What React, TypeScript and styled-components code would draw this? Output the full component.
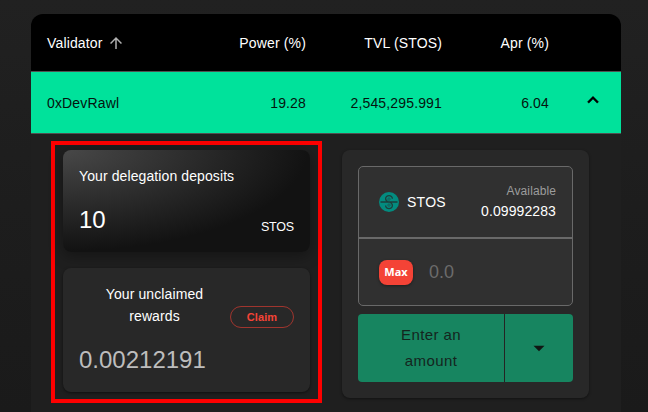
import React from "react";
import styled, { createGlobalStyle } from "styled-components";

const GlobalStyle = createGlobalStyle`
  * { box-sizing: border-box; }
  html, body { margin: 0; background: #202020; }
  body {
    font-family: "Liberation Sans", Arial, sans-serif;
    font-size: 14px;
    color: #fff;
    overflow: hidden;
  }
`;

const Page = styled.main`
  width: 648px;
  height: 412px;
  padding: 14px 27px 0 31px;
  overflow: hidden;
  background: linear-gradient(180deg, #212121 0%, #1d1d1d 50%, #1a1a1a 100%);
`;

const Table = styled.section`
  height: 440px;
  border-radius: 12px 12px 0 0;
  overflow: hidden;
  background: #1f1f1f;
`;

const Row = styled.div<{ $header?: boolean }>`
  display: grid;
  grid-template-columns: 127px 132px 136px 107px 1fr;
  align-items: center;
  height: ${(p) => (p.$header ? 58 : 62)}px;
  padding-left: 16px;
  border-bottom: 1px solid #515151;
  background: ${(p) => (p.$header ? "#000" : "#00e29b")};
  color: ${(p) => (p.$header ? "#fff" : "#04140e")};
  letter-spacing: 0.15px;
  line-height: 20px;
`;

const Cell = styled.div<{ $numeric?: boolean }>`
  display: flex;
  align-items: center;
  justify-content: ${(p) => (p.$numeric ? "flex-end" : "flex-start")};
  white-space: nowrap;
  padding-top: 1px;
`;

const SortIcon = styled.svg`
  width: 18px;
  height: 18px;
  margin-left: 4px;
  fill: #b0b0b0;
`;

const Toggle = styled.button`
  display: flex;
  justify-self: start;
  margin: -6px 0 0 33px;
  padding: 0;
  border: 0;
  background: none;
  color: #000;
  svg { width: 22px; height: 22px; fill: currentColor; }
`;

const Details = styled.div`
  display: flex;
  align-items: flex-start;
  gap: 20px;
  padding: 7px 0 0 20px;
`;

const Highlight = styled.div`
  display: flex;
  flex-direction: column;
  gap: 16px;
  width: 271px;
  height: 262px;
  padding: 5px 8px;
  border: 4px solid #fe0000;
`;

const Card = styled.article<{ $gradient?: boolean }>`
  display: flex;
  flex-direction: column;
  justify-content: space-between;
  height: ${(p) => (p.$gradient ? 102 : 124)}px;
  padding: 15px 16px 14px;
  border-radius: 8px;
  background: ${(p) =>
    p.$gradient
      ? "radial-gradient(ellipse farthest-corner at 0 0, #484848 0%, #121212 70%)"
      : "#282828"};
  box-shadow: ${(p) =>
    p.$gradient ? "0 4px 14px rgba(0, 0, 0, 0.35)" : "0 1px 3px rgba(0, 0, 0, 0.5)"};
`;

const CardLine = styled.div`
  display: flex;
  align-items: center;
  justify-content: space-between;
`;

const CardTitle = styled.div<{ $centered?: boolean }>`
  width: ${(p) => (p.$centered ? "151px" : "auto")};
  text-align: ${(p) => (p.$centered ? "center" : "left")};
  line-height: 22px;
  letter-spacing: 0.1px;
`;

const Amount = styled.div<{ $muted?: boolean }>`
  font-size: 24px;
  line-height: 36px;
  color: ${(p) => (p.$muted ? "#bdbdbd" : "#fff")};
`;

const Unit = styled.div`
  margin-top: 13px;
  font-size: 12.5px;
  letter-spacing: -0.2px;
  line-height: 20px;
`;

const ClaimButton = styled.button`
  align-self: flex-end;
  width: 64px;
  height: 22px;
  margin-bottom: -1px;
  padding: 0 0 1px;
  border: 1px solid #a0352e;
  border-radius: 11px;
  background: transparent;
  color: #f44336;
  font: 700 11px "Liberation Sans", Arial, sans-serif;
  letter-spacing: 0.1px;
`;

const StakePanel = styled.section`
  width: 247px;
  height: 248px;
  margin-top: 9px;
  padding: 16px;
  border-radius: 8px;
  background: #282828;
  box-shadow: 0 1px 3px rgba(0, 0, 0, 0.45);
`;

const AmountBox = styled.div`
  height: 140px;
  border: 1px solid #696969;
  border-radius: 5px;
  background: #303030;
`;

const TokenRow = styled.div`
  display: flex;
  align-items: center;
  height: 72px;
  padding: 0 16px 0 20px;
  border-bottom: 2px solid #696969;
`;

const TokenIcon = styled.svg`
  width: 20px;
  height: 20px;
  flex: none;
`;

const TokenName = styled.span`
  margin-left: 8px;
  line-height: 20px;
  letter-spacing: 0.25px;
`;

const Balance = styled.div`
  margin-left: auto;
  text-align: right;
  line-height: 20px;
  letter-spacing: 0.1px;
  padding-bottom: 2px;
`;

const BalanceLabel = styled.div`
  font-size: 12px;
  color: #9c9c9c;
`;

const InputRow = styled.div`
  display: flex;
  align-items: center;
  height: 66px;
  padding-left: 20px;
`;

const MaxButton = styled.button`
  width: 34px;
  height: 25px;
  padding: 0 0 1px;
  border: 0;
  border-radius: 8px;
  background: #f44336;
  box-shadow: 0 1px 3px rgba(0, 0, 0, 0.4);
  color: #fff;
  font: 700 11px "Noto Sans", sans-serif;
`;

const AmountInput = styled.input`
  width: 120px;
  margin-left: 16px;
  padding: 0;
  border: 0;
  outline: 0;
  background: transparent;
  color: #fff;
  font: 18px "Liberation Sans", Arial, sans-serif;
  &::placeholder { color: #6b6b6b; opacity: 1; }
`;

const ButtonGroup = styled.div`
  display: grid;
  grid-template-columns: 146px 68px;
  gap: 1px;
  height: 68px;
  margin-top: 8px;
  border-radius: 4px;
  overflow: hidden;
  background: #242424;
`;

const ActionButton = styled.button`
  display: flex;
  align-items: center;
  justify-content: center;
  padding: 0 34px;
  border: 0;
  background: #178560;
  color: #14251e;
  font: 15px/26px "Liberation Sans", Arial, sans-serif;
  letter-spacing: 0.4px;
`;

const MenuButton = styled(ActionButton)`
  padding: 0;
  color: #101713;
  svg { width: 22px; height: 22px; fill: currentColor; }
`;

export default function App() {
  return (
    <Page>
      <GlobalStyle />
      <Table>
        <Row $header>
          <Cell>
            Validator
            <SortIcon viewBox="0 0 24 24">
              <path d="M4 12l1.41 1.41L11 7.83V20h2V7.83l5.58 5.59L20 12l-8-8-8 8z" />
            </SortIcon>
          </Cell>
          <Cell $numeric>Power (%)</Cell>
          <Cell $numeric>TVL (STOS)</Cell>
          <Cell $numeric>Apr (%)</Cell>
        </Row>
        <Row>
          <Cell>0xDevRawl</Cell>
          <Cell $numeric>19.28</Cell>
          <Cell $numeric>2,545,295.991</Cell>
          <Cell $numeric>6.04</Cell>
          <Toggle aria-label="Collapse">
            <svg viewBox="0 0 24 24">
              <path
                d="M7.41 15.41L12 10.83l4.59 4.58L18 14l-6-6-6 6z"
                stroke="currentColor"
                strokeWidth=".5"
              />
            </svg>
          </Toggle>
        </Row>
        <Details>
          <Highlight>
            <Card $gradient>
              <CardTitle>Your delegation deposits</CardTitle>
              <CardLine>
                <Amount>10</Amount>
                <Unit>STOS</Unit>
              </CardLine>
            </Card>
            <Card>
              <CardLine>
                <CardTitle $centered>Your unclaimed rewards</CardTitle>
                <ClaimButton>Claim</ClaimButton>
              </CardLine>
              <Amount $muted>0.00212191</Amount>
            </Card>
          </Highlight>
          <StakePanel>
            <AmountBox>
              <TokenRow>
                <TokenIcon viewBox="0 0 20 20" fill="none">
                  <circle cx="10" cy="10" r="10" fill="#038b7f" />
                  <path
                    d="M1.5 10H18.5M13.4 6.7A3.4 3.1 0 1 0 6.6 6.7C6.6 8.7 7.8 9.4 9.6 10M6.6 13.6A3.4 3.1 0 1 0 13.4 13.6C13.4 11.5 12.2 10.7 10.4 10"
                    stroke="#1d3f3c"
                    strokeWidth="1.3"
                  />
                  <circle cx="10" cy="7.1" r="1.2" stroke="#1d4d47" strokeWidth=".7" />
                  <circle cx="10" cy="13.1" r="1.2" stroke="#1d4d47" strokeWidth=".7" />
                </TokenIcon>
                <TokenName>STOS</TokenName>
                <Balance>
                  <BalanceLabel>Available</BalanceLabel>
                  0.09992283
                </Balance>
              </TokenRow>
              <InputRow>
                <MaxButton>Max</MaxButton>
                <AmountInput placeholder="0.0" aria-label="Amount" />
              </InputRow>
            </AmountBox>
            <ButtonGroup>
              <ActionButton>Enter an amount</ActionButton>
              <MenuButton aria-label="More actions">
                <svg viewBox="0 0 24 24">
                  <path d="M6 9.5l6 6 6-6z" />
                </svg>
              </MenuButton>
            </ButtonGroup>
          </StakePanel>
        </Details>
      </Table>
    </Page>
  );
}
